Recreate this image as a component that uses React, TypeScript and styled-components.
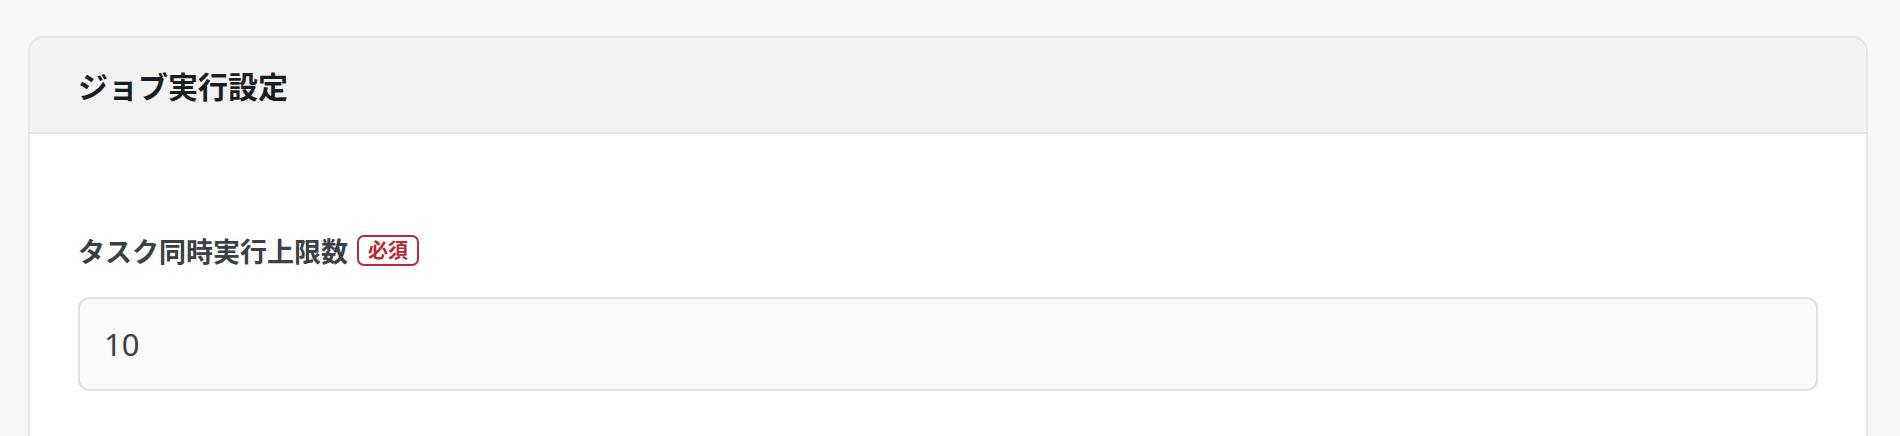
import React from 'react';
import styled, { createGlobalStyle } from 'styled-components';

const GlobalStyle = createGlobalStyle`
  html, body {
    margin: 0;
    padding: 0;
    background: #f8f8f8;
  }
  body {
    font-family: 'Noto Sans', 'Noto Sans CJK JP', sans-serif;
    color: #3b4045;
  }
`;

const Page = styled.div`
  padding: 36px 32px 0 28px;
`;

const Card = styled.section`
  background: #ffffff;
  border: 2px solid #e6e6e6;
  border-radius: 16px;
  overflow: hidden;
`;

const CardHeader = styled.header`
  display: flex;
  align-items: center;
  height: 94px;
  padding: 0 48px;
  background: #f2f2f2;
  border-bottom: 2px solid #e6e6e6;
`;

const Title = styled.h2`
  margin: 0;
  font-family: 'Noto Sans CJK JP', sans-serif;
  font-size: 30px;
  font-weight: 700;
  color: #1b1e21;
  line-height: 1;
`;

const CardBody = styled.div`
  padding: 96px 48px 80px;
`;

const FieldLabel = styled.label`
  display: flex;
  align-items: center;
  gap: 9px;
  height: 40px;
  margin-bottom: 27px;
  font-family: 'Noto Sans CJK JP', sans-serif;
  font-size: 27px;
  font-weight: 700;
  color: #3b4045;
`;

const RequiredBadge = styled.span`
  display: inline-flex;
  align-items: center;
  height: 31px;
  box-sizing: border-box;
  padding: 0 9px;
  border: 2px solid #b52a36;
  border-radius: 7px;
  font-size: 20px;
  font-weight: 700;
  color: #b52a36;
  line-height: 1;
`;

const NumberInput = styled.input`
  display: block;
  width: 100%;
  height: 94px;
  box-sizing: border-box;
  padding: 0 24px;
  background: #fafafa;
  border: 2px solid #e1e1e1;
  border-radius: 11px;
  font-family: 'Noto Sans', 'Noto Sans CJK JP', sans-serif;
  font-size: 31px;
  color: #3b4045;
  outline: none;
`;

export default function App() {
  return (
    <>
      <GlobalStyle />
      <Page>
        <Card>
          <CardHeader>
            <Title>ジョブ実行設定</Title>
          </CardHeader>
          <CardBody>
            <FieldLabel htmlFor="task-limit">
              タスク同時実行上限数
              <RequiredBadge>必須</RequiredBadge>
            </FieldLabel>
            <NumberInput id="task-limit" type="text" defaultValue="10" readOnly />
          </CardBody>
        </Card>
      </Page>
    </>
  );
}
